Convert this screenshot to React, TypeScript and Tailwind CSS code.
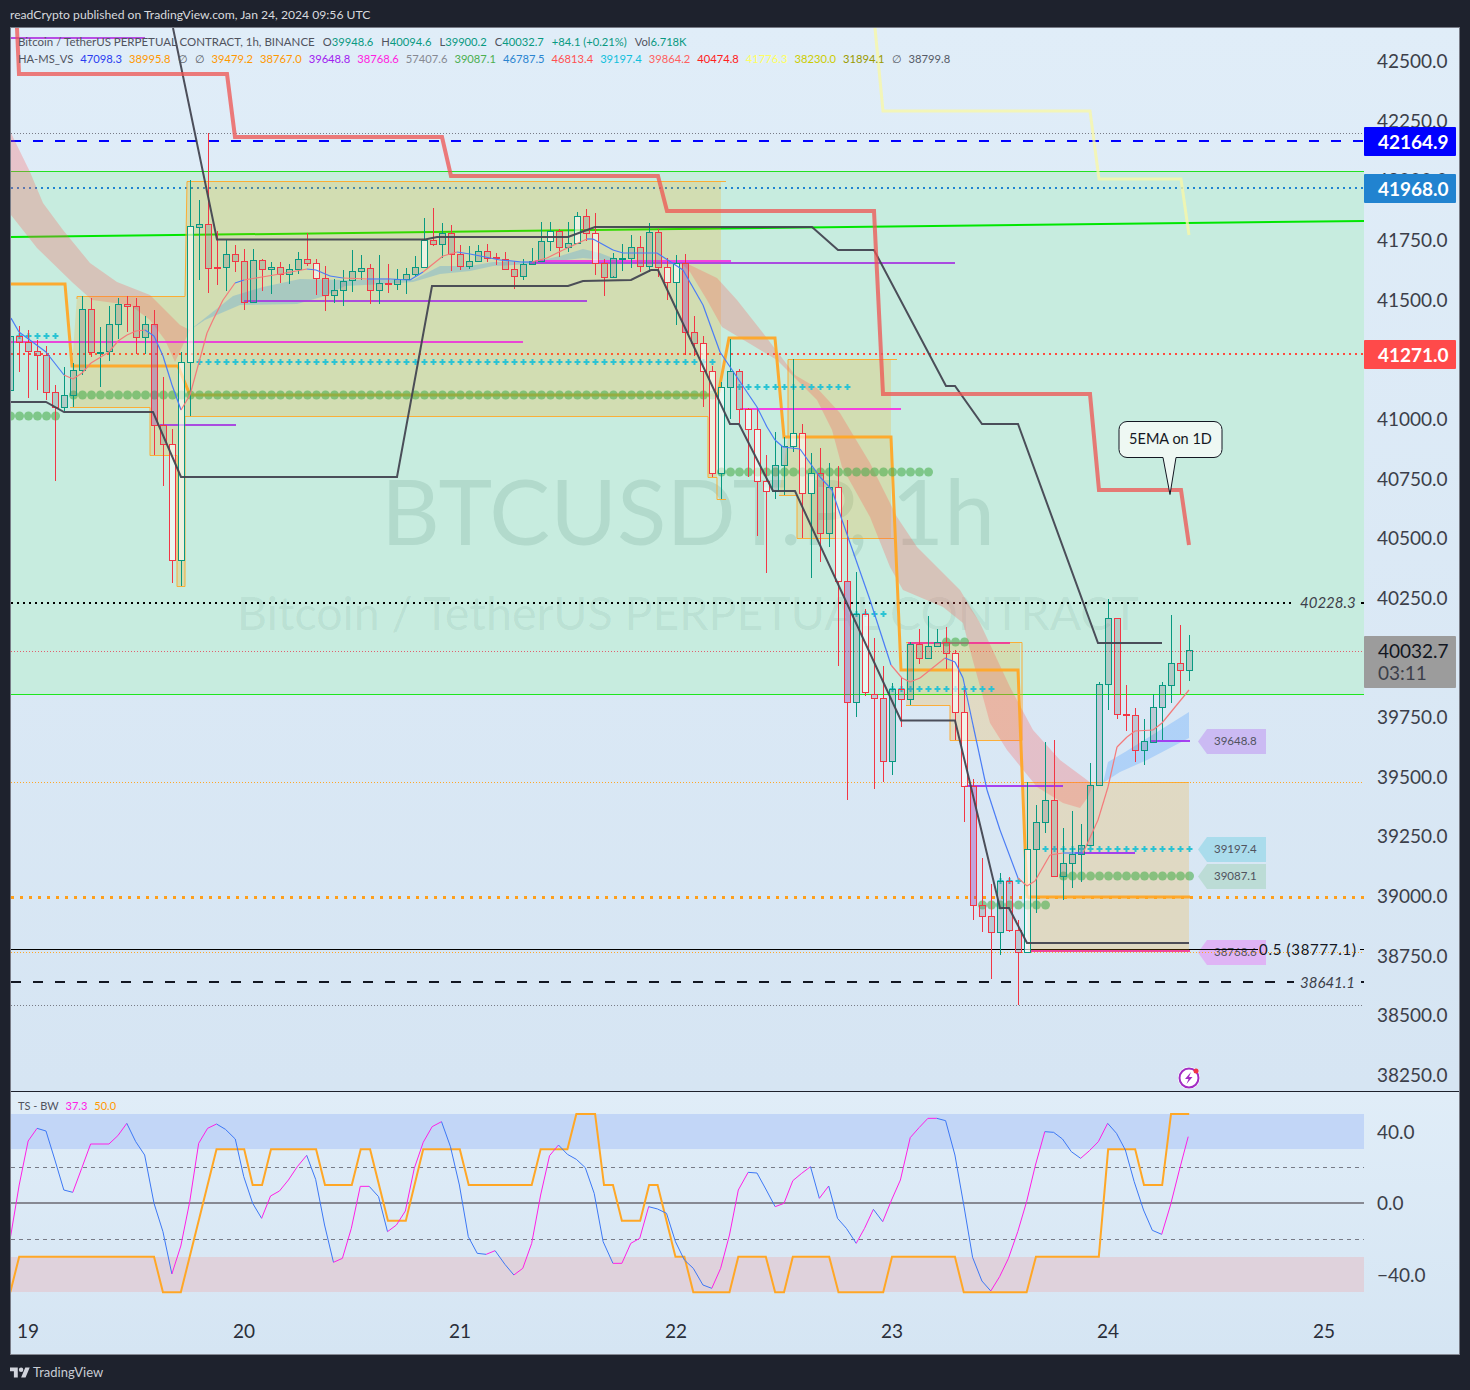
import React from 'react';

const FONT = "font-['Lato','Noto_Sans',sans-serif]";

// [color, bodyTop, bodyBottom, high, low, fill]  fill: 0 grey, 1 white, 2 purple
type Candle = [string, number, number, number, number, number?];
const candles: Candle[] = [
  ['g',336,390,332,392],['r',336,342,326,372],['r',342,351,330,398],['r',351,355,340,390],['r',355,392,346,400],
  ['r',392,407,385,481],['g',395,407,367,411],['g',370,395,363,407],['g',309,370,296,375],['r',309,352,298,357],
  ['g',352,352,327,387],['g',324,351,306,361],['g',304,324,298,339],['r',304,306,296,332],['r',306,337,298,354],
  ['g',324,337,316,354],['r',324,425,310,455,2],['r',425,444,377,486],['r',444,560,429,583,1],['g',362,560,352,586,1],
  ['g',226,362,180,416,1],['g',224,227,200,280],['r',224,268,133,293],['r',267,267,231,285],['g',254,267,240,291],
  ['r',254,261,245,272],['r',261,302,249,310],['g',260,302,249,302],['r',260,269,259,291],['g',267,269,262,294],
  ['r',267,274,262,283],['g',269,274,264,284],['g',259,269,252,274],['r',259,263,233,266],['r',263,278,259,295,1],
  ['r',278,295,266,311],['g',290,295,279,303],['g',281,290,270,306],['g',271,280,250,292],['g',268,271,255,280],
  ['r',268,290,264,304],['g',283,290,255,304],['r',283,283,264,293],['g',279,284,269,290],['g',274,279,268,294],
  ['g',267,274,256,276],['g',240,267,218,268,1],['r',240,244,208,246],['g',233,244,223,258],['r',233,254,225,271],
  ['r',254,266,245,270],['g',261,266,246,269],['g',251,261,245,262],['r',251,258,244,262],['r',257,257,253,265],
  ['r',259,269,252,269],['r',269,276,261,289],['g',264,276,259,280],['g',261,264,248,264],['g',241,261,222,261],
  ['g',231,241,222,251,1],['r',231,247,229,257],['g',243,247,222,252],['g',216,243,212,243,1],['r',216,233,209,241],
  ['r',233,263,213,275,1],['r',263,277,259,296],['g',258,277,253,276],['g',258,258,244,271],['g',247,258,235,268],
  ['r',247,266,236,272],['g',232,266,223,272],['r',232,267,229,277],['r',267,282,258,300,1],['g',263,282,255,325,1],
  ['r',263,332,254,355,2],['r',332,343,316,356],['r',343,371,336,407,1],['r',371,473,366,477,1],['g',387,473,382,499,1],
  ['g',371,387,339,419],['r',371,409,369,423],['r',409,429,408,477,1],['r',429,481,409,536,1],['r',481,491,455,573,1],
  ['g',465,491,432,499],['g',446,465,437,495],['g',433,446,359,452,1],['r',433,493,424,538,1],['g',473,493,453,578,1],
  ['r',473,533,448,562],['g',487,533,463,547],['r',487,581,466,666,1],['r',581,702,520,800,2],['g',614,702,572,717],
  ['r',614,692,609,696,1],['r',694,698,638,789],['r',698,761,666,782],['g',689,761,683,775],['r',689,699,677,727],
  ['g',644,699,642,705],['r',644,658,629,664],['g',646,658,616,658],['g',642,646,629,646],['r',642,653,627,669],
  ['r',653,712,650,740,1],['r',712,786,690,822,1],['r',786,905,779,920,2],['r',905,916,858,932],['r',916,932,884,979],
  ['g',881,932,873,955],['r',881,930,877,932],['r',930,952,920,1005],['g',849,952,782,952,1],['g',822,849,805,913],
  ['g',800,822,742,833],['r',800,876,740,876],['g',863,876,828,900],['g',854,863,811,888],['g',845,854,824,882],
  ['g',785,845,763,845],['g',684,785,682,785],['g',618,684,599,710],['r',618,714,618,719],['r',714,714,685,731],
  ['r',715,750,708,762],['g',741,750,719,765],['g',707,742,694,742],['g',685,707,682,740],['g',663,685,615,703],
  ['r',663,670,625,695],['g',650,670,635,681],
];

const cx = (i: number) => 10.5 + 9 * i;
const pts = (a: number[]) => {
  let s = '';
  for (let i = 0; i < a.length; i += 2) s += a[i] + ',' + a[i + 1] + ' ';
  return s;
};

const ema = [11,318,19,332,46,352,64,375,73,379,82,373,91,363,109,352,118,341,127,335,136,331,145,330,154,336,163,356,172,385,181,410,190,395,207,333,213,320,223,300,235,283,244,280,262,277,280,274,307,269,316,270,330,276,343,278,367,279,390,279,410,280,423,272,443,256,457,252,470,254,500,260,522,262,532,262,547,258,563,250,587,239,593,239,613,250,623,253,657,253,683,270,703,305,720,352,757,407,767,427,775,440,783,447,800,449,820,477,832,490,842,520,856,560,870,600,891,665,902,678,910,682,920,678,945,658,955,662,963,678,973,725,987,790,1000,830,1018,878,1027,886,1035,881,1050,855,1063,853,1083,853,1098,820,1108,787,1117,747,1127,737,1135,731,1153,730,1162,723,1189,690];
const emaPink = [[64,145],[181,235],[244,307],[343,367],[413,457],[532,587],[885,945],[1018,1063],[1080,1189]];

// oscillator, read from the two crops
const oscLeft = [23,460,43,300,63,168,83,130,103,138,123,225,143,315,163,322,183,250,203,177,224,177,244,177,264,152,284,115,304,170,324,210,345,355,365,440,385,567,405,483,425,350,445,175,465,130,485,117,505,133,527,162,546,275,566,355,586,400,606,333,626,318,646,285,666,245,687,211,707,283,727,420,747,532,767,520,787,430,807,304,827,304,848,335,868,440,888,420,908,378,928,250,948,172,968,125,989,110,1009,185,1029,300,1049,455,1069,505,1089,508,1109,497,1131,538,1151,570,1171,550,1191,475,1211,330,1231,212,1251,180,1271,208,1291,223,1311,248,1331,325,1351,470,1373,535,1393,535,1413,475,1433,460,1453,365,1473,372,1493,385,1513,470,1533,525,1553,550];
const oscRight = [6,600,24,610,42,550,60,450,78,315,98,262,116,264,135,315,153,365,171,355,189,287,207,265,225,245,243,340,262,303,280,400,298,430,318,475,335,430,353,373,372,410,390,345,408,285,428,158,446,128,464,100,482,100,500,107,519,210,537,360,555,517,574,588,592,618,610,575,628,520,647,440,665,350,683,240,702,140,720,142,738,162,756,200,775,220,793,197,811,170,830,115,848,145,866,195,884,290,903,375,921,436,940,448,958,360,976,255,994,155];
const orangeLeft = [23,622,43,515,345,515,365,622,405,622,485,193,547,193,566,300,587,300,607,193,708,193,728,300,788,300,808,193,829,193,869,407,909,407,948,193,1030,193,1050,300,1191,300,1211,193,1271,193,1291,87,1333,87,1353,300,1373,300,1393,407,1434,407,1454,300,1473,300,1513,515,1533,515,1553,622];
const orangeRight = [60,622,78,515,134,515,153,622,171,622,189,515,263,515,282,622,373,622,391,515,519,515,537,622,665,622,684,515,812,515,831,193,886,193,904,300,941,300,959,87,996,87];

const toOsc = (l: number[], r: number[]) => {
  const out: number[] = [];
  for (let i = 0; i < l.length; i += 2) out.push(l[i] / 2.24, 1085 + l[i + 1] / 3);
  for (let i = 0; i < r.length; i += 2) out.push(700 + r[i] / 2.036, 1085 + r[i + 1] / 3);
  return out;
};
const osc = toOsc(oscLeft, oscRight);
const oscOrange = toOsc(orangeLeft, orangeRight);

const range = (from: number, to: number) => {
  const r: number[] = [];
  for (let x = from; x <= to + 1; x += 9) r.push(x);
  return r;
};

const plusRows = [[336,19.5,55.5],[362,199.5,712],[387,739.5,847],[614,856.5,883.5],[689,892.5,991.5],[849,1045.5,1189.5],[881,1000.5,1018.5]];
const dotRows = [[416,10.5,55.5],[395,73.5,712.5],[472,721.5,928.5],[642,946.5,964.5],[905,982.5,1045.5],[876,1063.5,1189.5]];

const hSegs: [number, number, number, string][] = [
  [38,11,145,'#b13be0'],[342,11,523,'#ec35d8'],[425,160,236,'#a53be0'],[301,244,587,'#a53be0'],[263,530,955,'#a53be0'],
  [261,535,731,'#f72fe3'],[409,740,901,'#f72fe3'],[643,908,1010,'#f0359a'],[786,965,1063,'#a02ff0'],[853,1075,1135,'#a02ff0'],
  [741,1150,1190,'#a02ff0'],[951,1030,1190,'#f0359a'],
];

const axisPrices = ['42500.0','42250.0','42000.0','41750.0','41500.0','41250.0','41000.0','40750.0','40500.0','40250.0','40000.0','39750.0','39500.0','39250.0','39000.0','38750.0','38500.0','38250.0'];

const legendRow1: [string, string][] = [['O','39948.6'],['H','40094.6'],['L','39900.2'],['C','40032.7']];
const legendRow2: [string, string][] = [
  ['47098.3','text-[#2a3cf0]'],['38995.8','text-[#ff9800]'],['∅','text-[#555a66]'],['∅','text-[#555a66]'],['39479.2','text-[#ff9800]'],
  ['38767.0','text-[#ff9800]'],['39648.8','text-[#a020f0]'],['38768.6','text-[#ff20e0]'],['57407.6','text-[#868993]'],['39087.1','text-[#4caf50]'],
  ['46787.5','text-[#2a84d0]'],['46813.4','text-[#ff5050]'],['39197.4','text-[#10c0dc]'],['39864.2','text-[#ff6060]'],['40474.8','text-[#ff2020]'],
  ['41776.3','text-[#ffff60]'],['38230.0','text-[#cccc00]'],['31894.1','text-[#9a9a00]'],['∅','text-[#555a66]'],['38799.8','text-[#555a66]'],
];

const Pill = ({ top, bg, label }: { top: string; bg: string; label: string }) => (
  <div className={`absolute left-[1187px] w-[68px] h-[25px] ${top} ${bg} pl-[16px] text-[11.5px] leading-[23px] text-[#50535e] [clip-path:polygon(0_50%,9px_0,100%_0,100%_100%,9px_100%)]`}>
    {label}
  </div>
);

const Tag = ({ top, bg, label }: { top: string; bg: string; label: string }) => (
  <div className={`absolute left-0 w-[92px] h-[29px] ${top} ${bg} rounded-[1px] pl-[14px] text-[19px] leading-[29px] font-bold text-white`}>
    {label}
  </div>
);

function MainChart() {
  return (
    <svg width={1353} height={1063} viewBox="11 28 1353 1063" className="block absolute inset-0">
      <rect x={11} y={172} width={1353} height={522} fill="#c6ecdd" fillOpacity={0.94} />
      <line x1={11} x2={1364} y1={171.5} y2={171.5} stroke="#22e022" />
      <line x1={11} x2={1364} y1={694.5} y2={694.5} stroke="#1ee61e" />

      <text x={688} y={545} textAnchor="middle" fontSize={91} fill="#0a4a3a" fillOpacity={0.11} fontFamily="Lato, sans-serif">BTCUSDT.P, 1h</text>
      <text x={688} y={630} textAnchor="middle" fontSize={46.5} fill="#0a4a3a" fillOpacity={0.08} fontFamily="Lato, sans-serif">Bitcoin / TetherUS PERPETUAL CONTRACT</text>

      {/* level lines */}
      <line x1={11} x2={1364} y1={133.5} y2={133.5} stroke="#787b86" strokeDasharray="1 2" />
      <line x1={11} x2={1364} y1={141} y2={141} stroke="#0000ff" strokeWidth={2} strokeDasharray="10 12" />
      <line x1={11} x2={1364} y1={188} y2={188} stroke="#2084d0" strokeWidth={2} strokeDasharray="2 4" />
      <line x1={11} x2={1364} y1={354} y2={354} stroke="#ff4a3d" strokeWidth={2} strokeDasharray="2 4" />
      <line x1={11} x2={1292} y1={603} y2={603} stroke="#000" strokeWidth={2} strokeDasharray="2 4" />
      <line x1={1361} x2={1364} y1={603} y2={603} stroke="#000" strokeWidth={2} />
      <line x1={11} x2={1364} y1={651.5} y2={651.5} stroke="#e0606f" strokeDasharray="1 2" />
      <line x1={11} x2={1364} y1={782.5} y2={782.5} stroke="#ffa726" strokeDasharray="1 2" />
      <line x1={11} x2={1364} y1={897.5} y2={897.5} stroke="#ff9f1a" strokeWidth={3} strokeDasharray="3 6" />
      <line x1={11} x2={1258} y1={949.5} y2={949.5} stroke="#000" />
      <line x1={1360} x2={1364} y1={949.5} y2={949.5} stroke="#000" />
      <line x1={11} x2={1364} y1={952.5} y2={952.5} stroke="#ffa726" strokeDasharray="1 2" />
      <line x1={11} x2={1294} y1={982} y2={982} stroke="#131722" strokeWidth={2} strokeDasharray="10 12" />
      <line x1={1361} x2={1364} y1={982} y2={982} stroke="#131722" strokeWidth={2} />
      <line x1={11} x2={1364} y1={1005.5} y2={1005.5} stroke="#787b86" strokeDasharray="1 2" />
      <line x1={11} y1={237} x2={1364} y2={221} stroke="#00e600" strokeWidth={2} />

      {/* order blocks */}
      <polygon points={pts([77,296,185,296,187,181,721,181,721,393,717,393,717,477,708,477,708,416,185,416,185,586,177,586,177,455,150,455,150,407,72,407,72,366])} fill="rgba(255,165,0,.2)" />
      <polygon points={pts([788,359,891,359,891,538,797,538,797,495,779,495,788,437])} fill="rgba(255,165,0,.2)" />
      <polygon points={pts([906,642,1020,642,1020,740,950,740,950,705,906,705])} fill="rgba(255,165,0,.2)" />
      <polygon points={pts([1024,782,1189,782,1189,952,1028,952])} fill="rgba(255,165,0,.2)" />
      <g fill="none" stroke="#ffa726" strokeOpacity={0.9}>
        <polyline points={pts([77,299,77,296.5,185,296.5,187,181.5,726,181.5])} />
        <polyline points={pts([70,407.5,150,407.5,150,455.5,177,455.5,177,586.5,185,586.5,185,416.5,708,416.5,708,477.5,717,477.5,717,499.5,726,499.5])} />
        <polyline points={pts([788,437,788,359.5,897,359.5])} />
        <polyline points={pts([779,495.5,797,495.5,797,538.5,895,538.5])} />
        <polyline points={pts([906,642.5,1022,642.5,1022,740.5,950,740.5,950,705.5,906,705.5])} />
        <line x1={1024} x2={1189} y1={782.5} y2={782.5} />
      </g>

      {/* ribbons */}
      <polygon points={pts([11,133,30,172,43,203,63,230,90,263,117,282,150,295,180,325,190,330,175,362,165,340,150,320,130,305,92,300,73,283,37,248,11,215])} fill="rgba(255,90,85,.28)" />
      <polygon points={pts([190,330,205,318,233,296,263,287,300,279,343,280,413,280,440,266,470,266,493,262,533,262,560,256,583,249,600,253,623,262,583,258,533,264,493,266,470,271,440,274,413,282,385,284,345,286,325,296,297,304,240,305,205,320])} fill="rgba(60,150,230,.28)" />
      <polygon points={pts([680,262,690,265,717,278,737,300,763,333,795,375,817,388,840,413,870,463,897,517,917,547,960,590,980,623,1010,687,1033,730,1060,760,1087,780,1093,785,1088,797,1080,808,1063,803,1037,787,1007,750,990,723,970,650,963,623,943,607,903,590,890,567,870,517,842,467,832,430,817,400,777,360,752,345,722,327,707,300,690,272])} fill="rgba(255,90,85,.28)" />
      <polygon points={pts([1103,783,1108,762,1125,752,1189,712,1189,738,1147,760,1120,772])} fill="rgba(80,160,255,.3)" />

      {/* stepped orange + pivots */}
      <polyline fill="none" stroke="#ffa726" strokeWidth={3} strokeOpacity={0.95} points={pts([11,284,65,284,72,366,178,366,190,395,718,395,729,338,775,338,784,437,891,437,901,670,1018,670,1027,897,1190,897])} />

      {hSegs.map(([y, a, b, c], i) => (
        <line key={i} x1={a} x2={b} y1={y} y2={y} stroke={c} strokeWidth={2} strokeOpacity={0.9} />
      ))}

      {dotRows.map(([y, a, b]) =>
        range(a, b).map((x) => <circle key={y + '-' + x} cx={x} cy={y} r={4.5} fill="#4caf50" fillOpacity={0.6} />),
      )}
      {plusRows.map(([y, a, b]) =>
        range(a, b).map((x) => (
          <path key={y + '+' + x} d={`M${x - 3} ${y}h6M${x} ${y - 3}v6`} stroke="#2bc3d3" strokeWidth={2} fill="none" />
        )),
      )}

      {/* candles */}
      {candles.map((c, i) => {
        const x = cx(i);
        const col = c[0] === 'g' ? '#089981' : '#f23645';
        const fill = c[5] === 1 ? 'rgba(255,255,255,.6)' : c[5] === 2 ? 'rgba(156,39,176,.35)' : 'rgba(120,123,134,.28)';
        return (
          <g key={i}>
            <line x1={x} x2={x} y1={c[3]} y2={c[1]} stroke={col} />
            <line x1={x} x2={x} y1={c[2]} y2={c[4]} stroke={col} />
            <rect x={x - 3} y={c[1] + 0.5} width={6} height={Math.max(c[2] - c[1], 1)} fill={fill} stroke={col} />
          </g>
        );
      })}

      {/* thin ema, recoloured by stretch */}
      {ema.map((_, i) => {
        if (i % 2 || i + 3 >= ema.length) return null;
        const pink = emaPink.some(([a, b]) => ema[i] >= a && ema[i] < b);
        return <line key={i} x1={ema[i]} y1={ema[i + 1]} x2={ema[i + 2]} y2={ema[i + 3]} stroke={pink ? '#f47a7a' : '#4a7cf5'} strokeWidth={1.2} />;
      })}

      {/* 5EMA daily + yellow + dark steps */}
      <polyline fill="none" stroke="#434651" strokeWidth={2} strokeOpacity={0.95} points={pts([173,28,217,239.5,425,239.5,437,237,568,237,595,227,812,227,838,250,874,250,946,386,955,386,982,424,1018,424,1098,643,1162,643])} />
      <polyline fill="none" stroke="#434651" strokeWidth={2} strokeOpacity={0.95} points={pts([11,402,46,402,64,412,153,412,181,477,397,477,432,286,568,286,583,281,631,280,651,270,658,270,730,424,739,424,773,491,795,491,901,720.5,955,720.5,1000,908,1009,908,1027,943,1189,943])} />
      <polyline fill="none" stroke="#ef5350" strokeWidth={4} strokeOpacity={0.75} points={pts([17,28,19,74,227,74,235,137,442,137,451,176,658,176,667,211,874,211,883,394,1090,394,1099,490,1181,490,1189,545])} />
      <polyline fill="none" stroke="#f8f7a8" strokeWidth={3} strokeOpacity={0.8} points={pts([875,28,883,111,1090,111,1099,179,1181,179,1189,235])} />

      {/* callout */}
      <path d="M1127 421.5h87a8 8 0 0 1 8 8v20a8 8 0 0 1-8 8h-38l-6 37-7-37h-36a8 8 0 0 1-8-8v-20a8 8 0 0 1 8-8z" fill="#eef8f3" stroke="#131722" />
      <text x={1170.5} y={444} textAnchor="middle" fontSize={14.5} fill="#131722" fontFamily="Lato, sans-serif">5EMA on 1D</text>

      <g fontFamily="Lato, sans-serif" fill="#3c3f4a">
        <text x={1300} y={608} fontStyle="italic" fontSize={15}>40228.3</text>
        <text x={1300} y={988} fontStyle="italic" fontSize={15}>38641.1</text>
        <text x={1259} y={955} fontSize={15} letterSpacing={0.7} fill="#131722">0.5 (38777.1)</text>
      </g>

      {/* flash icon */}
      <circle cx={1189} cy={1078} r={11} fill="#fff" />
      <circle cx={1189} cy={1078} r={9.5} fill="none" stroke="#a32cc4" strokeWidth={2} />
      <path d="M1191 1072l-6 7h3.5l-2 5 6-7h-3.5z" fill="#a32cc4" />
      <circle cx={1196} cy={1071} r={2.5} fill="#f23645" />
    </svg>
  );
}

function OscChart() {
  return (
    <svg width={1353} height={218} viewBox="11 1092 1353 218" className="block absolute inset-0">
      <rect x={11} y={1114} width={1353} height={35} fill="#c2d6f7" />
      <rect x={11} y={1257} width={1353} height={35} fill="#dfd2dc" />
      <line x1={11} x2={1364} y1={1167.5} y2={1167.5} stroke="#787b86" strokeDasharray="4 4" />
      <line x1={11} x2={1364} y1={1239.5} y2={1239.5} stroke="#787b86" strokeDasharray="4 4" />
      <line x1={11} x2={1364} y1={1203} y2={1203} stroke="#868993" strokeWidth={2} />
      <polyline fill="none" stroke="#ffa726" strokeWidth={2} points={pts(oscOrange)} />
      {osc.map((_, i) => {
        if (i % 2 || i + 3 >= osc.length) return null;
        const rising = osc[i + 3] <= osc[i + 1];
        return <line key={i} x1={osc[i]} y1={osc[i + 1]} x2={osc[i + 2]} y2={osc[i + 3]} stroke={rising ? '#ff20e6' : '#3d78f5'} />;
      })}
    </svg>
  );
}

export default function App() {
  return (
    <div className={`w-[1470px] h-[1390px] bg-[#1e222d] flex flex-col ${FONT}`}>
      <div className="h-[27px] pl-[10px] text-[12.15px] leading-[29px] text-[#d8dade] shrink-0">
        readCrypto published on TradingView.com, Jan 24, 2024 09:56 UTC
      </div>

      <div className="ml-[10px] w-[1450px] h-[1328px] border border-[#787b86] border-b-[#868993] flex flex-col shrink-0">
        {/* main pane */}
        <div className="h-[1063px] flex bg-linear-to-b from-[#e0edf8] to-[#d6e5f3] shrink-0">
          <div className="relative w-[1353px] overflow-hidden shrink-0">
            <Pill top="top-[701px]" bg="bg-[#cbbaf3]" label="39648.8" />
            <Pill top="top-[809px]" bg="bg-[#aadcec]" label="39197.4" />
            <Pill top="top-[836px]" bg="bg-[#bcdcd6]" label="39087.1" />
            <Pill top="top-[912px]" bg="bg-[#dfb4f5]" label="38768.6" />
            <MainChart />
            <div className="absolute left-[7px] top-[5px] text-[#50535e]">
              <div className="flex gap-[8px] text-[11.2px] leading-[17px]">
                <span className="text-[11.5px]">Bitcoin / TetherUS PERPETUAL CONTRACT, 1h, BINANCE</span>
                {legendRow1.map(([k, v]) => (
                  <span key={k}>
                    {k}
                    <span className="text-[#089981]">{v}</span>
                  </span>
                ))}
                <span className="text-[#089981]">+84.1 (+0.21%)</span>
                <span>
                  Vol<span className="text-[#089981]">6.718K</span>
                </span>
              </div>
              <div className="flex gap-[7px] text-[11.2px] leading-[17px]">
                <span>HA-MS_VS</span>
                {legendRow2.map(([v, c], i) => (
                  <span key={i} className={c}>
                    {v}
                  </span>
                ))}
              </div>
            </div>
          </div>

          <div className="relative flex-1 pt-[3.5px] text-[19px] text-[#3c3f4a]">
            {axisPrices.map((p) => (
              <div key={p} className="h-[59.65px] pl-[13px] flex items-center">
                {p}
              </div>
            ))}
            <Tag top="top-[99px]" bg="bg-[#0000ff]" label="42164.9" />
            <Tag top="top-[146px]" bg="bg-[#2183d0]" label="41968.0" />
            <Tag top="top-[312px]" bg="bg-[#ff4a4a]" label="41271.0" />
            <div className="absolute left-0 top-[608px] w-[92px] h-[52px] bg-[#9c9c9c] rounded-[1px] pl-[14px] pt-[4px] text-[19px] leading-[22px] text-[#131722]">
              <div>40032.7</div>
              <div className="text-[#3c3f4a]">03:11</div>
            </div>
          </div>
        </div>

        <div className="h-px bg-[#1e222d] shrink-0" />

        {/* oscillator and time axis */}
        <div className="flex-1 flex flex-col bg-linear-to-b from-[#e0edf8] to-[#d5e5f3]">
          <div className="h-[218px] flex shrink-0">
            <div className="relative w-[1353px] overflow-hidden shrink-0">
              <OscChart />
              <div className="absolute left-[7px] top-[6px] flex gap-[7px] text-[11px] leading-[16px] text-[#50535e]">
                <span>TS - BW</span>
                <span className="text-[#ff20e6]">37.3</span>
                <span className="text-[#ff9800]">50.0</span>
              </div>
            </div>
            <div className="flex-1 pt-[4px] pl-[13px] text-[19px] text-[#3c3f4a]">
              <div className="h-[71.5px] flex items-center">40.0</div>
              <div className="h-[71.5px] flex items-center">0.0</div>
              <div className="h-[71.5px] flex items-center">−40.0</div>
            </div>
          </div>
          <div className="flex-1 flex gap-[180px] -ml-px pb-[2px] items-center text-[19px] text-[#2a2e39]">
            {['19', '20', '21', '22', '23', '24', '25'].map((d) => (
              <div key={d} className="w-[36px] text-center">
                {d}
              </div>
            ))}
          </div>
        </div>
      </div>

      <div className="flex-1 pl-[10px] flex items-center gap-[3px]">
        <svg width={20} height={16} viewBox="0 0 36 28" fill="#d1d4dc">
          <path d="M14 22H7V11H0V4h14v18zM28 22h-8l7.5-18h8L28 22z" />
          <circle cx={20} cy={8} r={4} />
        </svg>
        <span className="text-[13px] text-[#c8ccd4]">TradingView</span>
      </div>
    </div>
  );
}
